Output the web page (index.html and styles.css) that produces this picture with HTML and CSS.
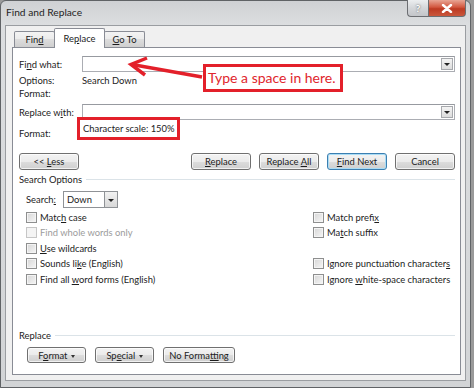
FILE: index.html
```html
<!DOCTYPE html>
<html lang="en">
  <head>
    <meta charset="UTF-8" />
    <title>Find and Replace</title>
    <link rel="stylesheet" href="styles.css">
  </head>
  <body>
    <div class="window">
      <div class="titlebar">
        <span class="title">Find and Replace</span>
        <div class="caption-buttons">
          <span class="cap-btn help">?</span>
          <span class="cap-btn close">
            <svg width="12" height="9" viewBox="0 0 12 9">
              <path d="M2 1 L10 8 M10 1 L2 8" stroke="#ffffff" stroke-width="2.4" stroke-linecap="round" />
            </svg>
          </span>
        </div>
      </div>

      <div class="client">
        <div class="tabs">
          <span class="tab tab-find">Fin<u>d</u></span>
          <span class="tab tab-replace active">Re<u>p</u>lace</span>
          <span class="tab tab-goto"><u>G</u>o To</span>
        </div>

        <div class="panel">
          <div class="field-row">
            <span class="label">Fi<u>n</u>d what:</span>
            <div class="combo"><span class="combo-arrow"></span></div>
          </div>
          <div class="info-row first">
            <span class="label">Options:</span>
            <span>Search Down</span>
          </div>
          <div class="info-row">
            <span class="label">Format:</span>
          </div>

          <div class="field-row replace-row">
            <span class="label">Replace w<u>i</u>th:</span>
            <div class="combo"><span class="combo-arrow"></span></div>
          </div>
          <div class="format-row">
            <span class="label">Format:</span>
            <span class="highlight">Character scale: 150%</span>
          </div>

          <div class="button-row">
            <button class="btn">&lt;&lt; <u>L</u>ess</button>
            <div class="actions">
              <button class="btn"><u>R</u>eplace</button>
              <button class="btn">Replace <u>A</u>ll</button>
              <button class="btn default"><u>F</u>ind Next</button>
              <button class="btn">Cancel</button>
            </div>
          </div>

          <div class="group-title search-title">
            <span>Search Options</span>
            <span class="rule"></span>
          </div>

          <div class="search-row">
            <span class="search-label">Search<u>:</u></span>
            <div class="select">
              <span class="select-value">Down</span>
              <span class="select-arrow"></span>
            </div>
          </div>

          <div class="options">
            <div class="option"><span class="check"></span><span>Matc<u>h</u> case</span></div>
            <div class="option"><span class="check"></span><span>Match prefi<u>x</u></span></div>
            <div class="option disabled"><span class="check"></span><span>Find whole words only</span></div>
            <div class="option"><span class="check"></span><span>Ma<u>t</u>ch suffix</span></div>
            <div class="option"><span class="check"></span><span><u>U</u>se wildcards</span></div>
            <div class="option empty"></div>
            <div class="option"><span class="check"></span><span>Sounds li<u>k</u>e (English)</span></div>
            <div class="option"><span class="check"></span><span>Ignore punctuation character<u>s</u></span></div>
            <div class="option"><span class="check"></span><span>Find all <u>w</u>ord forms (English)</span></div>
            <div class="option"><span class="check"></span><span>Ignore <u>w</u>hite-space characters</span></div>
          </div>

          <div class="group-title replace-title">
            <span>Replace</span>
            <span class="rule"></span>
          </div>

          <div class="bottom-row">
            <button class="btn menu-btn">F<u>o</u>rmat <span class="caret"></span></button>
            <button class="btn menu-btn">Sp<u>e</u>cial <span class="caret"></span></button>
            <button class="btn wide">No Forma<u>t</u>ting</button>
          </div>

          <!-- annotation -->
          <svg class="arrow" width="200" height="40" viewBox="0 0 200 40">
            <path d="M189 29 L119 16.5" stroke="#e3202a" stroke-width="3.5" fill="none" />
            <path d="M134 10 L118 16.5 L132 27" stroke="#e3202a" stroke-width="3.5" fill="none" stroke-linejoin="miter" />
          </svg>
          <div class="callout">Type a space in here.</div>
        </div>
      </div>
    </div>
  </body>
</html>
```

FILE: styles.css
```css
* {
  box-sizing: border-box;
}
body {
  margin: 0;
  background: #9a9a9a;
  font-family: Lato, "Noto Sans", sans-serif;
  font-size: 9.4px;
  color: #1c1c1c;
}
u {
  text-decoration: underline;
  text-underline-offset: 1px;
}
.window {
  width: 471px;
  height: 388px;
  display: flex;
  flex-direction: column;
  background: linear-gradient(#cfd1d4, #dcdee0 24px, #d2d4d6);
  border: 1px solid #606366;
  border-radius: 6px 6px 0 0;
  padding: 0 4px 6px 4px;
}
.titlebar {
  height: 24px;
  display: flex;
  justify-content: space-between;
  align-items: flex-start;
}
.title {
  padding: 5px 0 0 1px;
  font-size: 10.2px;
  color: #1e1e1e;
}
.caption-buttons {
  display: flex;
  margin-top: -1px;
}
.cap-btn {
  height: 17px;
  display: flex;
  align-items: center;
  justify-content: center;
  border: 1px solid #6c6e72;
  border-top: none;
}
.help {
  width: 21px;
  background: linear-gradient(#eceef0, #d4d6d9 50%, #c3c5c9);
  border-radius: 0 0 0 4px;
  border-right: none;
  color: #fff;
  font-weight: bold;
  font-size: 10px;
  text-shadow: 0 0 2px #444;
}
.close {
  width: 38px;
  background: linear-gradient(#e8a594, #d2573f 45%, #bd3a22 55%, #c9573c);
  border-radius: 0 0 4px 0;
}

.client {
  flex: 1;
  display: flex;
  flex-direction: column;
  background: #f0f0f0;
  border: 1px solid #9a9da1;
  padding: 3px 4px 5px 6px;
}
.tabs {
  height: 18px;
  display: flex;
  align-items: flex-end;
  padding-left: 2px;
}
.tab {
  height: 16px;
  display: flex;
  align-items: center;
  justify-content: center;
  border: 1px solid #898c95;
  border-bottom: none;
  border-radius: 2px 2px 0 0;
  background: linear-gradient(#f3f3f3, #ebebeb 50%, #dddddd 50%, #cfcfcf);
}
.tab-find {
  width: 41px;
}
.tab-replace {
  width: 51px;
  margin: 0 -1px;
}
.tab-goto {
  width: 41px;
}
.tab.active {
  height: 20px;
  margin-bottom: -1px;
  background: #fff;
  position: relative;
  z-index: 2;
}

.panel {
  flex: 1;
  position: relative;
  display: flex;
  flex-direction: column;
  background: #fff;
  border: 1px solid #898c95;
  padding: 8px 5px 11px 6px;
}
.label {
  width: 63px;
  flex: none;
}
.field-row {
  height: 16px;
  display: flex;
  align-items: center;
}
.replace-row {
  margin-top: 4px;
}
.combo {
  flex: 1;
  height: 16px;
  display: flex;
  justify-content: flex-end;
  padding: 1px;
  border: 1px solid #abadb3;
  border-top-color: #979aa0;
  background: #fff;
}
.combo-arrow {
  width: 12px;
  position: relative;
  border: 1px solid #a7a9ad;
  background: linear-gradient(#f4f4f4, #dcdcdc);
}
.combo-arrow::after,
.select-arrow::after {
  content: "";
  position: absolute;
  left: 50%;
  top: 50%;
  margin: -1px 0 0 -3px;
  border: 3px solid transparent;
  border-top: 3px solid #222;
  border-bottom: none;
}
.info-row {
  height: 13px;
  display: flex;
  align-items: center;
}
.info-row.first {
  margin-top: 2px;
}
.format-row {
  height: 14px;
  margin-top: 6px;
  display: flex;
  align-items: center;
}
.highlight {
  align-self: flex-start;
  position: relative;
  top: -9px;
  left: -5px;
  width: 103px;
  height: 23px;
  padding: 0 0 0 3px;
  line-height: 17px;
  border: 3px solid #e3202a;
  background: #fff;
  color: #1c1c1c;
  white-space: nowrap;
}

.button-row {
  height: 17px;
  margin-top: 13px;
  display: flex;
  justify-content: space-between;
}
.actions {
  display: flex;
  gap: 8px;
}
.btn {
  width: 60px;
  height: 17px;
  padding: 0;
  font: inherit;
  color: #1c1c1c;
  white-space: nowrap;
  border: 1px solid #707070;
  border-radius: 3px;
  background: linear-gradient(#f3f3f3, #ebebeb 50%, #dddddd 50%, #cfcfcf);
  box-shadow: inset 0 0 0 1px rgba(255, 255, 255, 0.7);
}
.btn.default {
  border-color: #3c7fb1;
  box-shadow: inset 0 0 0 1px #a9dcf5;
}

.group-title {
  height: 12px;
  display: flex;
  align-items: center;
  gap: 4px;
}
.search-title {
  margin-top: 3px;
}
.replace-title {
  margin-top: auto;
}
.rule {
  flex: 1;
  height: 1px;
  background: #dbe3e8;
}

.search-row {
  height: 17px;
  margin-top: 6px;
  padding-left: 7px;
  display: flex;
  align-items: center;
}
.search-label {
  width: 37px;
}
.select {
  width: 55px;
  height: 17px;
  display: flex;
  border: 1px solid #8f9296;
  background: #fff;
}
.select-value {
  flex: 1;
  padding-left: 3px;
  line-height: 15px;
}
.select-arrow {
  width: 13px;
  position: relative;
  border-left: 1px solid #8f9296;
  background: linear-gradient(#f2f2f2, #d8d8d8);
}

.options {
  margin-top: 1.5px;
  padding-left: 7px;
  display: grid;
  grid-template-columns: 287px 1fr;
  grid-auto-rows: 15.5px;
}
.option {
  display: flex;
  align-items: center;
  gap: 3px;
  white-space: nowrap;
}
.check {
  width: 11px;
  height: 11px;
  flex: none;
  border: 1px solid #8e8f8f;
  background: linear-gradient(135deg, #d6d6d6, #f6f6f6);
  box-shadow: inset 0 0 0 1px #f4f4f4;
}
.option.disabled {
  color: #9c9c9c;
}
.option.disabled .check {
  border-color: #c6c6c6;
  background: #f4f4f4;
}

.bottom-row {
  height: 16px;
  margin-top: 6px;
  padding-left: 8px;
  display: flex;
  gap: 9px;
}
.bottom-row .btn {
  width: 59px;
  height: 16px;
}
.bottom-row .btn.wide {
  width: 72px;
}
.caret {
  display: inline-block;
  vertical-align: middle;
  margin-left: 1px;
  border: 2.5px solid transparent;
  border-top: 3px solid #333;
  border-bottom: none;
}

.arrow {
  position: absolute;
  left: 0;
  top: 0;
  pointer-events: none;
}
.callout {
  position: absolute;
  left: 190px;
  top: 16px;
  width: 140px;
  height: 28px;
  padding-left: 2px;
  border: 3px solid #e3202a;
  background: #fff;
  color: #e0262d;
  font-size: 14px;
  line-height: 22px;
  white-space: nowrap;
}
```
